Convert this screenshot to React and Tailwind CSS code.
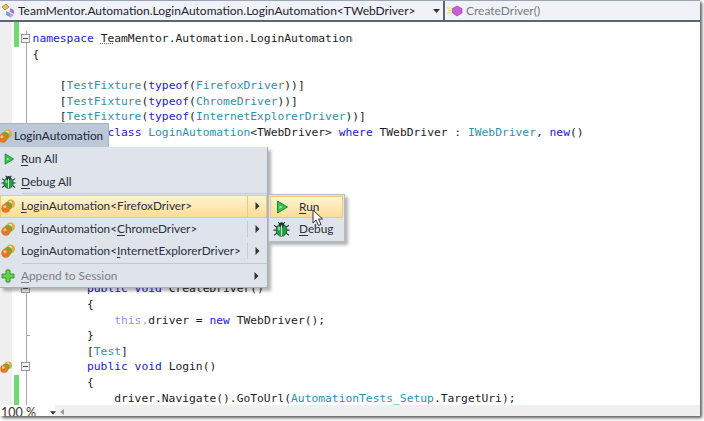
import React from 'react'

const K = 'text-[#2020e0]'
const T = 'text-[#2b91af]'
const L = 'text-[#9a8ee8]'
const N = 'text-[#1c1c1c]'

const LINES = [
  { changed: true, fold: 'box', parts: [['namespace', K], [' '], ['Te', 'squiggle'], ['amMentor.Automation.LoginAutomation']] },
  { parts: [['{']] },
  { parts: [] },
  { parts: [['    ['], ['TestFixture', T], ['('], ['typeof', K], ['('], ['FirefoxDriver', T], ['))]']] },
  { parts: [['    ['], ['TestFixture', T], ['('], ['typeof', K], ['('], ['ChromeDriver', T], ['))]']] },
  { parts: [['    ['], ['TestFixture', T], ['('], ['typeof', K], ['('], ['InternetExplorerDriver', T], ['))]']] },
  { parts: [['    '], ['public class', K], [' '], ['LoginAutomation', T], ['<TWebDriver> '], ['where', K], [' TWebDriver : '], ['IWebDriver', T], [', '], ['new', K], ['()']] },
  ...Array.from({ length: 9 }, () => ({ parts: [] })),
  { fold: 'box', parts: [['        '], ['public void', K], [' CreateDriver()']] },
  { parts: [['        {']] },
  { parts: [['            '], ['this', L], ['.', L], ['driver = '], ['new', K], [' TWebDriver();']] },
  { fold: 'tick', parts: [['        }']] },
  { parts: [['        ['], ['Test', T], [']']] },
  { fold: 'box', ball: true, parts: [['        '], ['public void', K], [' Login()']] },
  { changed: true, parts: [['        {']] },
  { changed: true, parts: [['            driver.Navigate().GoToUrl('], ['AutomationTests_Setup', T], ['.TargetUri);']] },
]

function Balls({ className = '' }) {
  return (
    <svg viewBox="0 0 16 16" className={className}>
      <circle cx="11" cy="5.5" r="5" fill="#e8a83c" />
      <circle cx="10.5" cy="4" r="2" fill="#fbe7a8" />
      <circle cx="8" cy="8" r="4.6" fill="#5fae3c" />
      <circle cx="5.5" cy="10.5" r="5.2" fill="#e07a20" />
      <circle cx="4.5" cy="8.8" r="1.8" fill="#f8c48a" />
    </svg>
  )
}

function Play({ className = '' }) {
  return (
    <svg viewBox="0 0 14 14" className={className}>
      <path d="M2.5 1 L12.5 7 L2.5 13 Z" fill="#35c24a" stroke="#1c8a3c" strokeWidth="1" strokeLinejoin="round" />
      <path d="M4.5 5.5 L7.5 7 L4.5 8.5 Z" fill="#b5f0a0" />
    </svg>
  )
}

function Bug({ className = '' }) {
  return (
    <svg viewBox="0 0 16 16" className={className}>
      <path d="M1 5 L4 7 M15 5 L12 7 M0.5 9.5 H3.5 M15.5 9.5 H12.5 M1 14.5 L4 12 M15 14.5 L12 12 M5 2 L6.5 4 M11 2 L9.5 4" stroke="#333" strokeWidth="1.1" fill="none" />
      <ellipse cx="8" cy="9.5" rx="5" ry="5.8" fill="#22a04a" stroke="#14552c" strokeWidth="0.8" />
      <circle cx="8" cy="4.5" r="2.4" fill="#1d3d28" />
      <path d="M8 5 V15" stroke="#d8f5d8" strokeWidth="1" />
      <ellipse cx="5.7" cy="8" rx="1.1" ry="1.8" fill="#7fe08f" />
    </svg>
  )
}

function Plus({ className = '' }) {
  return (
    <svg viewBox="0 0 14 14" className={className}>
      <path d="M5 1 H9 V5 H13 V9 H9 V13 H5 V9 H1 V5 H5 Z" fill="#63cf4a" stroke="#3c9a34" strokeWidth="1" />
    </svg>
  )
}

function Arrow() {
  return (
    <svg viewBox="0 0 5 8" className="w-[5px] h-[8px]">
      <path d="M0.5 0 L4.5 4 L0.5 8 Z" fill="#333" />
    </svg>
  )
}

function Mn({ children }) {
  return <span className="underline underline-offset-2 decoration-1">{children}</span>
}

function MenuItem({ icon, children, active, arrow, split, disabled }) {
  return (
    <div className={`flex items-center h-[22.5px] border ${active ? 'border-[#f0c878] bg-gradient-to-b from-[#fef3d2] to-[#fddc95]' : 'border-transparent'} ${disabled ? 'text-[#7d8087]' : 'text-[#2a3040]'}`}>
      <div className="w-[20px] shrink-0 flex items-center justify-center">{icon}</div>
      <div className="flex-1 whitespace-nowrap">{children}</div>
      {arrow && (
        <div className={`w-[19px] flex items-center justify-center ${split ? (active ? 'h-full border-l border-[#f0c878]' : 'h-[16px] border-l border-[#c6ccd6]') : ''}`}>
          <Arrow />
        </div>
      )}
    </div>
  )
}

function Separator() {
  return <div className="h-[1px] ml-[22px] bg-[#c4cad4] my-[0.6px]" />
}

function CodeLine({ line }) {
  return (
    <div className="flex h-[15.65px] shrink-0">
      <div className="w-[12px] shrink-0 bg-[#f0f0f0] flex items-center">
        {line.ball && <Balls className="w-[12px] h-[12px] shrink-0" />}
      </div>
      <div className="w-[2px] shrink-0" />
      <div className={`w-[5px] shrink-0 ${line.changed ? 'bg-[#6fdc6f]' : ''}`} />
      <div className="w-[12px] shrink-0 relative">
        <div className="absolute left-[7px] top-0 bottom-0 w-[1px] bg-[#a8a8a8]" />
        {line.fold === 'box' && (
          <div className="absolute left-[2px] top-[3px] w-[9px] h-[9px] border border-[#9a9a9a] bg-[#f4f4f4] flex items-center justify-center">
            <div className="w-[5px] h-[1px] bg-[#555]" />
          </div>
        )}
        {line.fold === 'tick' && <div className="absolute left-[7px] top-[7px] w-[4px] h-[1px] bg-[#a8a8a8]" />}
      </div>
      <div className="flex-1 pl-[1.6px] font-['DejaVu_Sans_Mono',monospace] text-[11.3px] leading-[15.65px] whitespace-pre text-[#1c1c1c]">
        {line.parts.map(([text, cls], i) => (
          cls === 'squiggle'
            ? <span key={i} className="underline decoration-dotted decoration-[#2f9a2f]">{text}</span>
            : <span key={i} className={cls || N}>{text}</span>
        ))}
      </div>
    </div>
  )
}

export default function App() {
  return (
    <div className="relative w-[704px] h-[421px] bg-white overflow-hidden font-['Lato',sans-serif]">
      <div className="w-[700px] h-[416px] flex flex-col bg-white shadow-[2px_2px_3px_rgba(0,0,0,0.65)]">
        {/* dropdown bar */}
        <div className="h-[22px] shrink-0 flex items-center border-t border-t-[#9aa6b8] border-b-2 border-b-[#5b6675] bg-[#f0f2f7]">
          <div className="w-[445px] h-full flex items-center border-r-2 border-[#5b6675]">
            <svg viewBox="0 0 16 16" className="w-[16px] h-[16px] ml-[1px] shrink-0">
              <path d="M1 4 L5 1 L8 4 L4 7 Z" fill="#e8c050" stroke="#9a7a20" strokeWidth="0.7" />
              <path d="M9 5 L13 7 L13 11 L9 9 Z" fill="#b070d0" />
              <path d="M5 8 L9 10 L9 14 L5 12 Z" fill="#7ba0d8" />
              <path d="M9 10 L13 12 L9 15 Z" fill="#c9a0e0" />
            </svg>
            <span className="flex-1 text-[12px] text-[#1f2430] whitespace-nowrap ml-[1px]">TeamMentor.Automation.LoginAutomation.LoginAutomation&lt;TWebDriver&gt;</span>
            <svg viewBox="0 0 7 4" className="w-[7px] h-[4px] mr-[3px] shrink-0"><path d="M0 0 H7 L3.5 4 Z" fill="#333" /></svg>
          </div>
          <svg viewBox="0 0 16 12" className="w-[16px] h-[12px] ml-[2px] shrink-0">
            <path d="M0 3 H5 M1 5.5 H5 M0 8 H5" stroke="#e5de7a" strokeWidth="1" />
            <path d="M10 1 L15 3.5 L15 8 L10 11 L5.5 8 L5.5 3.5 Z" fill="#c860d8" stroke="#8e3aa0" strokeWidth="0.6" />
          </svg>
          <span className="ml-[3px] text-[12px] text-[#767a82] whitespace-nowrap">CreateDriver()</span>
        </div>

        {/* editor */}
        <div className="flex-1 min-h-0 flex flex-col overflow-hidden">
          <div className="flex h-[9px] shrink-0">
            <div className="w-[12px] bg-[#f0f0f0]" />
            <div className="w-[2px]" />
            <div className="w-[5px] bg-[#6fdc6f]" />
          </div>
          {LINES.map((line, i) => <CodeLine key={i} line={line} />)}
        </div>

        {/* zoom strip */}
        <div className="h-[11px] shrink-0 bg-[#f0f0f0] flex items-start overflow-hidden">
          <div className="w-[55px] h-[11px] flex items-start bg-white">
            <span className="ml-[1px] text-[12.5px] leading-[15px] text-[#333] whitespace-nowrap">100 %</span>
            <svg viewBox="0 0 7 4" className="w-[6px] h-[4px] ml-[14px] mt-[6px] shrink-0"><path d="M0 0 H7 L3.5 4 Z" fill="#333" /></svg>
          </div>
          <svg viewBox="0 0 4 6" className="w-[4px] h-[6px] ml-[5px] mt-[4px]"><path d="M4 0 V6 L0 3 Z" fill="#999" /></svg>
        </div>
      </div>

      {/* caret mark on the first line */}
      <div className="absolute left-[352px] top-[38px] w-[1px] h-[4px] bg-[#a8ecf4]" />

      {/* context menu */}
      <div className="absolute left-0 top-[123px] text-[11.8px]">
        <div className="w-[109px] h-[24px] flex items-center bg-[#bcc7d8] border-t border-r border-[#a9b4c4] text-[#20283a]">
          <Balls className="w-[14px] h-[14px] -ml-[2px] shrink-0" />
          <span className="ml-[2px] whitespace-nowrap">LoginAutomation</span>
        </div>
        <div className="w-[268px] h-[141px] pt-[1px] bg-[#dfe3ea] border-r border-b border-[#a6afbc] shadow-[3px_3px_3px_rgba(0,0,0,0.3)] flex flex-col">
          <MenuItem icon={<Play className="w-[12px] h-[12px] -ml-[5px]" />}><Mn>R</Mn>un All</MenuItem>
          <MenuItem icon={<Bug className="w-[15px] h-[15px] -ml-[6px]" />}><Mn>D</Mn>ebug All</MenuItem>
          <Separator />
          <MenuItem active arrow split icon={<Balls className="w-[14px] h-[14px] -ml-[6px]" />}><Mn>L</Mn>oginAutomation&lt;FirefoxDriver&gt;</MenuItem>
          <MenuItem arrow split icon={<Balls className="w-[14px] h-[14px] -ml-[6px]" />}>LoginAutomation&lt;<Mn>C</Mn>hromeDriver&gt;</MenuItem>
          <MenuItem arrow split icon={<Balls className="w-[14px] h-[14px] -ml-[6px]" />}>LoginAutomation&lt;<Mn>I</Mn>nternetExplorerDriver&gt;</MenuItem>
          <Separator />
          <MenuItem disabled arrow icon={<Plus className="w-[14px] h-[14px] -ml-[6px]" />}><Mn>A</Mn>ppend to Session</MenuItem>
        </div>
      </div>

      {/* submenu */}
      <div className="absolute left-[268px] top-[194px] w-[77px] h-[48px] p-[1px] text-[11.8px] bg-[#dfe3ea] border border-[#b4bcc8] shadow-[3px_3px_3px_rgba(0,0,0,0.3)] flex flex-col">
        <div className="flex items-center h-[22px] border border-[#f0c878] bg-gradient-to-b from-[#fef3d2] to-[#fddc95] text-[#2a3040]">
          <Play className="w-[14px] h-[14px] ml-[4px]" />
          <span className="ml-[10px]"><Mn>R</Mn>un</span>
        </div>
        <div className="flex items-center h-[23px] text-[#2a3040]">
          <Bug className="w-[17px] h-[17px] ml-[3px]" />
          <span className="ml-[9px]"><Mn>D</Mn>ebug</span>
        </div>
      </div>

      {/* mouse pointer */}
      <svg viewBox="0 0 12 18" className="absolute left-[312px] top-[209px] w-[12px] h-[18px]">
        <path d="M1 1 V14 L4 11 L6.5 16.5 L9 15.5 L6.5 10 H10.5 Z" fill="#fff" stroke="#333" strokeWidth="1" strokeLinejoin="round" />
      </svg>
    </div>
  )
}
